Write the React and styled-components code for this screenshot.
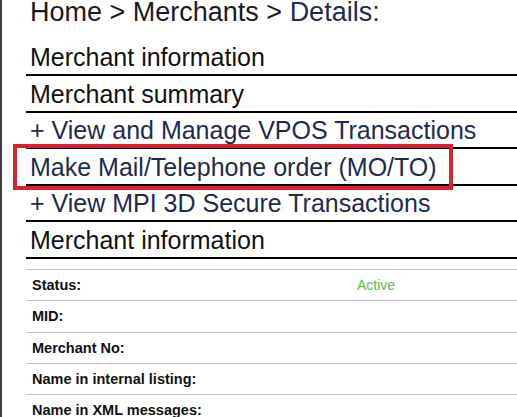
import React from "react";
import styled, { createGlobalStyle } from "styled-components";

const GlobalStyle = createGlobalStyle`
  html, body {
    margin: 0;
    padding: 0;
    background: #fff;
    overflow: hidden;
  }
  body {
    font-family: "Liberation Sans", Arial, sans-serif;
  }
`;

const Page = styled.div`
  min-height: 100vh;
  border-left: 2px solid #404040;
  padding-left: 24px;
  box-sizing: border-box;
`;

const Breadcrumb = styled.div`
  font-size: 27px;
  line-height: 30px;
  color: #1a1a1a;
  padding-left: 4px;
  margin: -3.5px 0 13px;
  white-space: nowrap;
`;

const Current = styled.span`
  color: #1f2c4f;
`;

const Section = styled.div`
  position: relative;
  font-size: 25px;
  line-height: 28px;
  padding: 3.5px 0 3px 4px;
  border-bottom: 2px solid #000;
  color: ${(p) => (p.$link ? "#1e2b4d" : "#111")};
  white-space: nowrap;

  ${(p) =>
    p.$marked &&
    `
    &::after {
      content: "";
      position: absolute;
      left: -13px;
      top: -5px;
      width: 440px;
      height: 46px;
      border: 4px solid #d8232f;
      box-sizing: border-box;
      pointer-events: none;
    }
  `}
`;

const Table = styled.div`
  margin-top: 10.5px;
  display: grid;
  grid-template-columns: 325px 1fr;
  border-top: 1px solid #c4c4c4;
`;

const Row = styled.div`
  display: contents;
`;

const Cell = styled.div`
  height: 30.25px;
  display: flex;
  align-items: center;
  padding-left: 6px;
  border-bottom: 1px solid #c4c4c4;
  font-size: ${(p) => (p.$label ? "14.5px" : "14px")};
  font-weight: ${(p) => (p.$label ? 700 : 400)};
  color: ${(p) => (p.$ok ? "#5cb85c" : "#111")};
  white-space: nowrap;
`;

const sections = [
  { text: "Merchant information" },
  { text: "Merchant summary" },
  { text: "+ View and Manage VPOS Transactions", link: true },
  { text: "Make Mail/Telephone order (MO/TO)", link: true, marked: true },
  { text: "+ View MPI 3D Secure Transactions", link: true },
  { text: "Merchant information" },
];

const details = [
  { label: "Status:", value: "Active", ok: true },
  { label: "MID:", value: "" },
  { label: "Merchant No:", value: "" },
  { label: "Name in internal listing:", value: "" },
  { label: "Name in XML messages:", value: "" },
];

export default function App() {
  return (
    <>
      <GlobalStyle />
      <Page>
        <Breadcrumb>
          Home &gt; Merchants &gt; <Current>Details:</Current>
        </Breadcrumb>
        {sections.map((s, i) => (
          <Section key={i} $link={s.link} $marked={s.marked}>
            {s.text}
          </Section>
        ))}
        <Table>
          {details.map((d) => (
            <Row key={d.label}>
              <Cell $label>{d.label}</Cell>
              <Cell $ok={d.ok}>{d.value}</Cell>
            </Row>
          ))}
        </Table>
      </Page>
    </>
  );
}
